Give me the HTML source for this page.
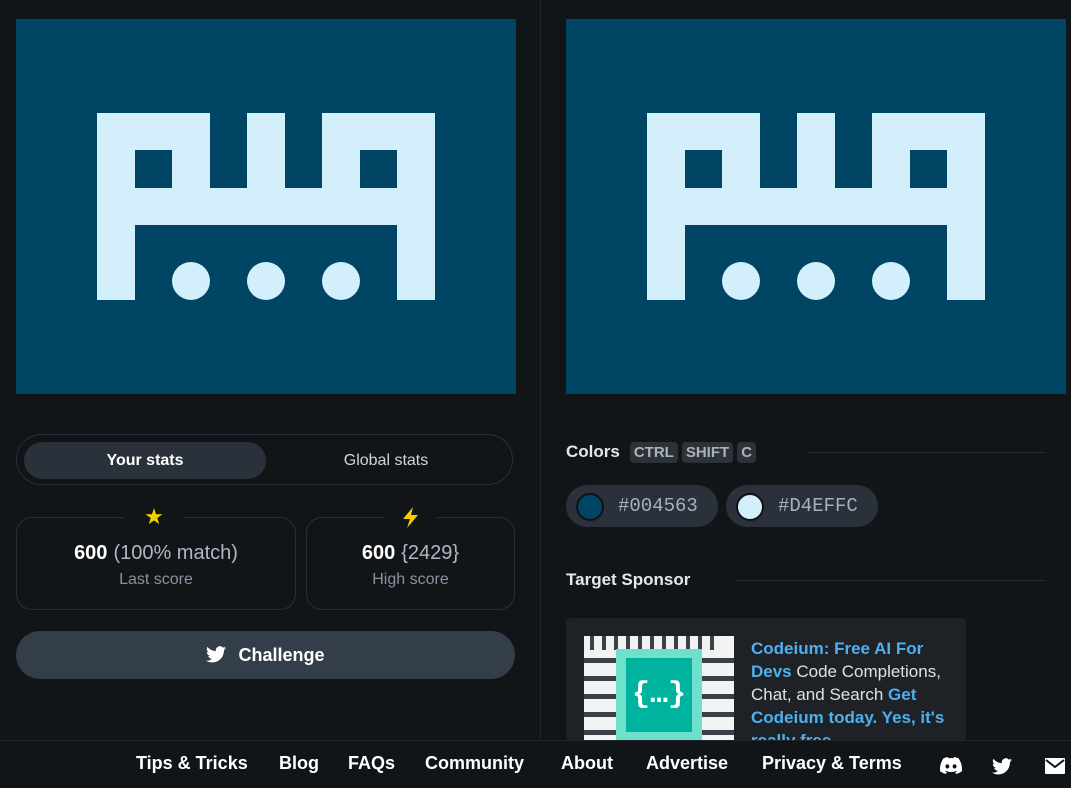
<!DOCTYPE html>
<html><head><style>
body{margin:0;width:1071px;height:787px;background:#121518;font-family:"Liberation Sans",sans-serif;position:relative;overflow:hidden;color:#fff}
.abs{position:absolute}
.c{fill:#d4effc}
.tog{left:16px;top:434px;width:497px;height:51px;border:1px solid #2a3038;border-radius:26px;box-sizing:border-box}
.box{border:1px solid #2a3038;border-radius:16px;box-sizing:border-box;text-align:center}
.big{font-weight:bold;font-size:20px;margin-top:24px}
.big span{font-weight:normal;color:#aeb8c4;margin-left:6px}
.sub{color:#8793a0;font-size:16px;margin-top:6px}
.key{display:inline-block;background:#2d3238;color:#aab2bb;font-size:15px;padding:2px 4px;border-radius:4px;margin-left:4px}
.pill{height:42px;background:#2a313a;border-radius:21px;top:485px}
.pill .dot{position:absolute;left:10px;top:8px;width:24px;height:24px;border-radius:50%;border:2px solid #111}
.pill .t{position:absolute;left:52px;top:10px;font-family:"Liberation Mono",monospace;font-size:19px;color:#a7b1bc}
.foot a{color:#fff;font-weight:bold;font-size:18px;text-decoration:none;position:absolute;top:753px}
</style></head><body>
<div class="abs" style="left:540px;top:0;width:1px;height:740px;background:#22272d"></div>
<svg class="abs" style="left:16px;top:19px" width="500" height="375"><rect width="500" height="375" fill="#004563"/><g class="c"><path d="M81 94H194V169H306V94H419V281H381V206H119V281H81Z M119 131V169H156V131Z M344 131V169H381V131Z" fill-rule="evenodd"/><rect x="231" y="94" width="38" height="76"/><circle cx="175" cy="262" r="19"/><circle cx="250" cy="262" r="19"/><circle cx="325" cy="262" r="19"/></g></svg>
<svg class="abs" style="left:566px;top:19px" width="500" height="375"><rect width="500" height="375" fill="#004563"/><g class="c"><path d="M81 94H194V169H306V94H419V281H381V206H119V281H81Z M119 131V169H156V131Z M344 131V169H381V131Z" fill-rule="evenodd"/><rect x="231" y="94" width="38" height="76"/><circle cx="175" cy="262" r="19"/><circle cx="250" cy="262" r="19"/><circle cx="325" cy="262" r="19"/></g></svg>

<div class="abs tog"></div>
<div class="abs" style="left:24px;top:442px;width:242px;height:37px;background:#2a313a;border-radius:19px;text-align:center;line-height:37px;font-size:16px;font-weight:bold">Your stats</div>
<div class="abs" style="left:270px;top:442px;width:232px;line-height:37px;text-align:center;font-size:16px;color:#d0d5db">Global stats</div>

<div class="abs box" style="left:16px;top:517px;width:280px;height:93px"><div class="big">600<span>(100% match)</span></div><div class="sub">Last score</div></div>
<div class="abs" style="left:124px;top:504px;width:60px;height:26px;background:#121518;text-align:center;color:#f5d000;font-size:22px;line-height:26px">★</div>
<div class="abs box" style="left:306px;top:517px;width:209px;height:93px"><div class="big">600<span>{2429}</span></div><div class="sub">High score</div></div>
<svg class="abs" style="left:385px;top:504px;background:#121518" width="52" height="26"><path d="M28 3L18 15H25L22 24L33 11H26Z" fill="#f5d000"/></svg>

<div class="abs" style="left:16px;top:631px;width:499px;height:48px;background:#343e4a;border-radius:24px;text-align:center;line-height:48px;font-weight:bold;font-size:18px"><svg width="20" height="17" viewBox="0 0 24 20" style="vertical-align:-2px;margin-right:12px"><path fill="#fff" d="M24 2.4c-.9.4-1.8.6-2.8.8 1-.6 1.8-1.6 2.200-2.7-1 .6-2 1-3.1 1.2A4.9 4.9 0 0 0 11.9 6 14 14 0 0 1 1.7.9a4.9 4.9 0 0 0 1.5 6.6c-.8 0-1.6-.2-2.2-.6 0 2.4 1.7 4.4 3.9 4.8-.7.2-1.5.2-2.2.1.6 2 2.4 3.4 4.6 3.4A9.9 9.9 0 0 1 0 17.3 14 14 0 0 0 7.5 19.5c9.1 0 14-7.5 14-14v-.6c1-.7 1.8-1.6 2.5-2.5z"/></svg>Challenge</div>

<div class="abs" style="left:566px;top:442px;font-weight:bold;font-size:17px;color:#e4e7eb">Colors<span class="key" style="margin-left:10px">CTRL</span><span class="key">SHIFT</span><span class="key">C</span></div>
<div class="abs" style="left:807px;top:452px;width:238px;height:1px;background:#2a3038"></div>
<div class="abs pill" style="left:566px;width:152px"><div class="dot" style="background:#004563"></div><div class="t">#004563</div></div>
<div class="abs pill" style="left:726px;width:152px"><div class="dot" style="background:#d4effc"></div><div class="t">#D4EFFC</div></div>

<div class="abs" style="left:566px;top:570px;font-weight:bold;font-size:17px;color:#e4e7eb">Target Sponsor</div>
<div class="abs" style="left:735px;top:580px;width:310px;height:1px;background:#2a3038"></div>
<div class="abs" style="left:566px;top:618px;width:400px;height:122px;background:#1e2226;border-radius:4px"></div>
<svg class="abs" style="left:584px;top:636px" width="150" height="104"><rect width="150" height="104" fill="#f2f4f4"/><g fill="#3b4046"><rect x="6" y="0" width="4" height="14"/><rect x="18" y="0" width="4" height="14"/><rect x="30" y="0" width="4" height="14"/><rect x="42" y="0" width="4" height="14"/><rect x="54" y="0" width="4" height="14"/><rect x="66" y="0" width="4" height="14"/><rect x="78" y="0" width="4" height="14"/><rect x="90" y="0" width="4" height="14"/><rect x="102" y="0" width="4" height="14"/><rect x="114" y="0" width="4" height="14"/><rect x="126" y="0" width="4" height="14"/><rect x="0" y="22" width="150" height="5"/><rect x="0" y="40" width="150" height="5"/><rect x="0" y="58" width="150" height="5"/><rect x="0" y="76" width="150" height="5"/><rect x="0" y="94" width="150" height="5"/></g><rect x="32" y="13" width="86" height="91" fill="#6ee0cc"/><rect x="42" y="22" width="66" height="74" fill="#00b39e"/><text x="75" y="66" text-anchor="middle" fill="#fff" font-family="Liberation Mono" font-size="30" font-weight="bold">{…}</text></svg>
<div class="abs" style="left:751px;top:637px;width:200px;font-size:17px;line-height:23px;color:#e0e0e0;height:103px;overflow:hidden"><b style="color:#4db0f0">Codeium: Free AI For Devs</b> Code Completions, Chat, and Search <b style="color:#4db0f0">Get Codeium today. Yes, it's really free</b></div>

<div class="abs" style="left:0;top:740px;width:1071px;height:47px;background:#121518;border-top:1px solid #22272d"></div>
<div class="foot"><a style="left:136px">Tips &amp; Tricks</a><a style="left:279px">Blog</a><a style="left:348px">FAQs</a><a style="left:425px">Community</a><a style="left:561px">About</a><a style="left:646px">Advertise</a><a style="left:762px">Privacy &amp; Terms</a></div>
<svg class="abs" style="left:940px;top:757px" width="22" height="17" viewBox="0 0 22 17"><path fill="#fff" d="M18.6 1.4A18 18 0 0 0 14 0l-.6 1.2a17 17 0 0 0-5 0L8 0a18 18 0 0 0-4.6 1.4C.5 5.7-.3 10 .1 14.2A18 18 0 0 0 5.7 17l1.2-1.9-1.9-.9.5-.4a13 13 0 0 0 11 0l.5.4-1.9.9 1.2 1.9a18 18 0 0 0 5.6-2.8c.5-4.9-.8-9.1-3.3-12.8zM7.4 11.6c-1.1 0-2-1-2-2.2s.9-2.2 2-2.2 2 1 2 2.2-.9 2.2-2 2.2zm7.2 0c-1.1 0-2-1-2-2.2s.9-2.2 2-2.2 2 1 2 2.2-.9 2.2-2 2.2z"/></svg>
<svg class="abs" style="left:992px;top:758px" width="20" height="17" viewBox="0 0 24 20"><path fill="#fff" d="M24 2.4c-.9.4-1.8.6-2.8.8 1-.6 1.8-1.6 2.2-2.7-1 .6-2 1-3.1 1.2A4.9 4.9 0 0 0 11.9 6 14 14 0 0 1 1.7.9a4.9 4.9 0 0 0 1.5 6.6c-.8 0-1.6-.2-2.2-.6 0 2.4 1.7 4.4 3.9 4.8-.7.2-1.5.2-2.2.1.6 2 2.4 3.4 4.6 3.4A9.9 9.9 0 0 1 0 17.3 14 14 0 0 0 7.5 19.5c9.1 0 14-7.5 14-14v-.6c1-.7 1.8-1.6 2.5-2.5z"/></svg>
<svg class="abs" style="left:1045px;top:758px" width="20" height="16"><rect width="20" height="16" rx="1" fill="#fff"/><path d="M1 2L10 9L19 2" stroke="#121518" stroke-width="2" fill="none"/></svg>
</body></html>
